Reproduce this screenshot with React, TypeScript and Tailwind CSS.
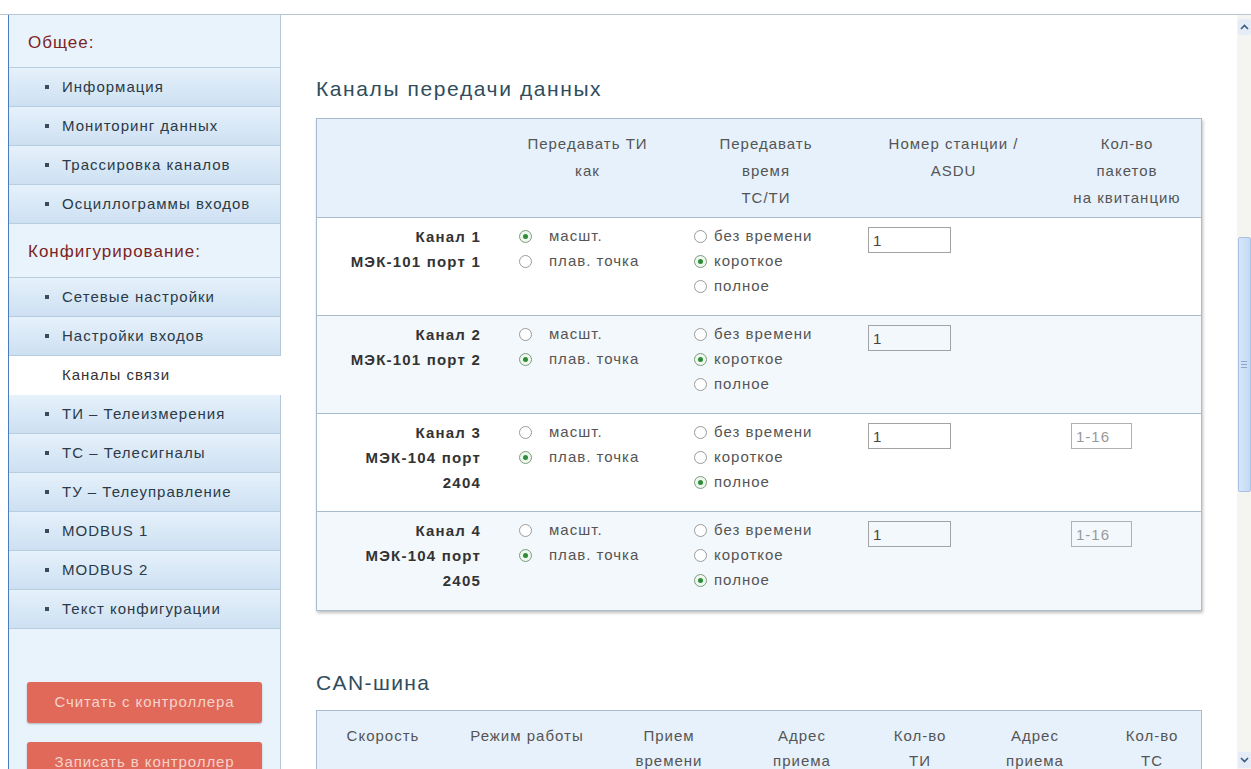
import React from "react";

type Channel = {
  label: string[];
  tiMode: number;
  timeMode: number;
  station: string;
  packets: boolean;
};

const channels: Channel[] = [
  { label: ["Канал 1", "МЭК-101 порт 1"], tiMode: 0, timeMode: 1, station: "1", packets: false },
  { label: ["Канал 2", "МЭК-101 порт 2"], tiMode: 1, timeMode: 1, station: "1", packets: false },
  { label: ["Канал 3", "МЭК-104 порт", "2404"], tiMode: 1, timeMode: 2, station: "1", packets: true },
  { label: ["Канал 4", "МЭК-104 порт", "2405"], tiMode: 1, timeMode: 2, station: "1", packets: true },
];

const generalMenu = ["Информация", "Мониторинг данных", "Трассировка каналов", "Осциллограммы входов"];

const configMenu = [
  "Сетевые настройки",
  "Настройки входов",
  "Каналы связи",
  "ТИ – Телеизмерения",
  "ТС – Телесигналы",
  "ТУ – Телеуправление",
  "MODBUS 1",
  "MODBUS 2",
  "Текст конфигурации",
];

const canHeaders = [
  ["Скорость"],
  ["Режим работы"],
  ["Прием", "времени"],
  ["Адрес", "приема"],
  ["Кол-во", "ТИ"],
  ["Адрес", "приема"],
  ["Кол-во", "ТС"],
];

const Radio = ({ on }: { on?: boolean }) => (
  <span
    className={`w-[13px] h-[13px] rounded-full border flex items-center justify-center shrink-0 ${
      on ? "border-[#7d9a7d] bg-[#eef8ee]" : "border-[#9a9a9a] bg-white"
    }`}
  >
    {on && <span className="w-[5px] h-[5px] rounded-full bg-[#2e8b3a]" />}
  </span>
);

const RadioGroup = ({ options, value, gap }: { options: string[]; value: number; gap: string }) => (
  <div className="flex flex-col">
    {options.map((opt, i) => (
      <label key={opt} className={`flex items-center h-[25px] whitespace-nowrap ${gap}`}>
        <Radio on={i === value} />
        <span>{opt}</span>
      </label>
    ))}
  </div>
);

const MenuItem = ({ text, active }: { text: string; active?: boolean }) =>
  active ? (
    <div className="h-[39px] shrink-0 bg-white flex items-center pl-[53px] mr-[-1px] relative z-10 text-[#333]">
      {text}
    </div>
  ) : (
    <div className="h-[39px] shrink-0 flex items-center border-b border-[#b7cde0] bg-gradient-to-b from-[#e6f1fb] to-[#cde0f2] text-[#2b3a48]">
      <span className="w-[4px] h-[4px] bg-[#3b4b5b] ml-[36px] mr-[13px]" />
      {text}
    </div>
  );

const cols1 = "grid grid-cols-[192px_157px_200px_175px_162px]";
const cols2 = "grid grid-cols-[132px_156px_128px_138px_98px_132px_102px]";

export default function App() {
  return (
    <div className="w-[1251px] h-[769px] overflow-hidden bg-white flex flex-col font-['Liberation_Sans',Arial,sans-serif] text-[15px] tracking-[1px]">
      <div className="h-[14px] shrink-0" />
      <div className="flex flex-1 min-h-0 border-t border-[#b9c6d2] pl-[8px]">
        {/* left navigation */}
        <aside className="w-[273px] shrink-0 bg-[#e9f3fb] border-l border-[#4a7cc2] border-r border-r-[#b7c8d6] flex flex-col">
          <div className="h-[53px] shrink-0 flex items-center pl-[19px] pt-[4px] text-[17px] text-[#7a2424] border-b border-[#b7cde0]">
            Общее:
          </div>
          {generalMenu.map((m) => (
            <MenuItem key={m} text={m} />
          ))}
          <div className="h-[54px] shrink-0 flex items-center pl-[19px] pt-[2px] text-[17px] text-[#7a2424] border-b border-[#b7cde0]">
            Конфигурирование:
          </div>
          {configMenu.map((m) => (
            <MenuItem key={m} text={m} active={m === "Каналы связи"} />
          ))}
          <div className="shrink-0 flex flex-col gap-[19px] px-[18px] pt-[53px]">
            <button className="h-[41px] rounded-[3px] bg-[#e0695a] text-[#f7d3cc] tracking-[0.9px] shadow-[0_1px_2px_rgba(0,0,0,0.25)]">
              Считать с контроллера
            </button>
            <button className="h-[41px] rounded-[3px] bg-[#e0695a] text-[#f7d3cc] tracking-[0.9px] shadow-[0_1px_2px_rgba(0,0,0,0.25)]">
              Записать в контроллер
            </button>
          </div>
        </aside>

        {/* content */}
        <main className="flex-1 min-w-0 px-[35px] text-[#555]">
          <h2 className="pt-[60px] mb-[15px] text-[21px] leading-[28px] tracking-[1.6px] text-[#2f4d5c]">
            Каналы передачи данных
          </h2>
          <div className="border border-[#a9bccb] shadow-[1px_2px_3px_rgba(0,0,0,0.25)]">
            <div className={`${cols1} h-[99px] bg-[#e6f1fb] border-b border-[#a9bccb] pt-[11px] leading-[27px] text-center`}>
              <div />
              <div>
                Передавать ТИ
                <br />
                как
              </div>
              <div>
                Передавать
                <br />
                время
                <br />
                ТС/ТИ
              </div>
              <div>
                Номер станции /
                <br />
                ASDU
              </div>
              <div className="pl-[10px]">
                Кол-во
                <br />
                пакетов
                <br />
                на квитанцию
              </div>
            </div>
            {channels.map((ch, i) => (
              <div
                key={ch.label[0]}
                className={`${cols1} h-[98px] pt-[6px] ${i % 2 ? "bg-[#f3f8fc]" : "bg-white"} ${
                  i < channels.length - 1 ? "border-b border-[#a9bccb]" : ""
                }`}
              >
                <div className="text-right pr-[28px] font-bold text-[#333] leading-[25px] tracking-[1.2px]">
                  {ch.label.map((l) => (
                    <div key={l}>{l}</div>
                  ))}
                </div>
                <div className="pl-[10px]">
                  <RadioGroup options={["масшт.", "плав. точка"]} value={ch.tiMode} gap="gap-[17px]" />
                </div>
                <div className="pl-[28px]">
                  <RadioGroup options={["без времени", "короткое", "полное"]} value={ch.timeMode} gap="gap-[7px]" />
                </div>
                <div className="pl-[2px] pt-[3px]">
                  <input
                    defaultValue={ch.station}
                    className="w-[83px] h-[26px] border border-[#a3a3a3] px-[4px] text-[15px] text-[#444] outline-none"
                  />
                </div>
                <div className="pl-[30px] pt-[3px]">
                  {ch.packets && (
                    <input
                      placeholder="1-16"
                      className="w-[61px] h-[26px] border border-[#b0b0b0] px-[4px] text-[15px] tracking-[1px] placeholder:text-[#999] outline-none"
                    />
                  )}
                </div>
              </div>
            ))}
          </div>

          <h2 className="mt-[58px] mb-[13px] text-[21px] leading-[28px] tracking-[1.4px] text-[#2f4d5c]">CAN-шина</h2>
          <div className="border border-[#a9bccb] bg-[#e6f1fb] h-[80px]">
            <div className={`${cols2} pt-[12px] leading-[25px] text-center`}>
              {canHeaders.map((h, i) => (
                <div key={i}>
                  {h.map((l) => (
                    <div key={l}>{l}</div>
                  ))}
                </div>
              ))}
            </div>
          </div>
        </main>

        {/* scrollbar */}
        <div className="w-[14px] shrink-0 bg-[#f4f4f1] flex flex-col items-center">
          <div className="w-[13px] h-[16px] mt-[4px] flex items-center justify-center bg-[#e3ecf7] rounded-[2px]">
            <svg width="9" height="6" viewBox="0 0 9 6">
              <path d="M1 5 L4.5 1.5 L8 5" fill="none" stroke="#3d5a80" strokeWidth="1.6" />
            </svg>
          </div>
          <div className="h-[202px]" />
          <div className="w-[13px] h-[255px] rounded-[2px] border border-[#a8c1e4] bg-gradient-to-r from-[#d6e6f9] to-[#c4daf4] flex items-center justify-center">
            <div className="flex flex-col gap-[2px]">
              <span className="w-[6px] h-px bg-[#8aa6cc]" />
              <span className="w-[6px] h-px bg-[#8aa6cc]" />
              <span className="w-[6px] h-px bg-[#8aa6cc]" />
            </div>
          </div>
          <div className="flex-1" />
          <div className="w-[13px] h-[16px] mb-[1px] flex items-center justify-center bg-[#e3ecf7] rounded-[2px]">
            <svg width="9" height="6" viewBox="0 0 9 6">
              <path d="M1 1 L4.5 4.5 L8 1" fill="none" stroke="#3d5a80" strokeWidth="1.6" />
            </svg>
          </div>
        </div>
      </div>
    </div>
  );
}
